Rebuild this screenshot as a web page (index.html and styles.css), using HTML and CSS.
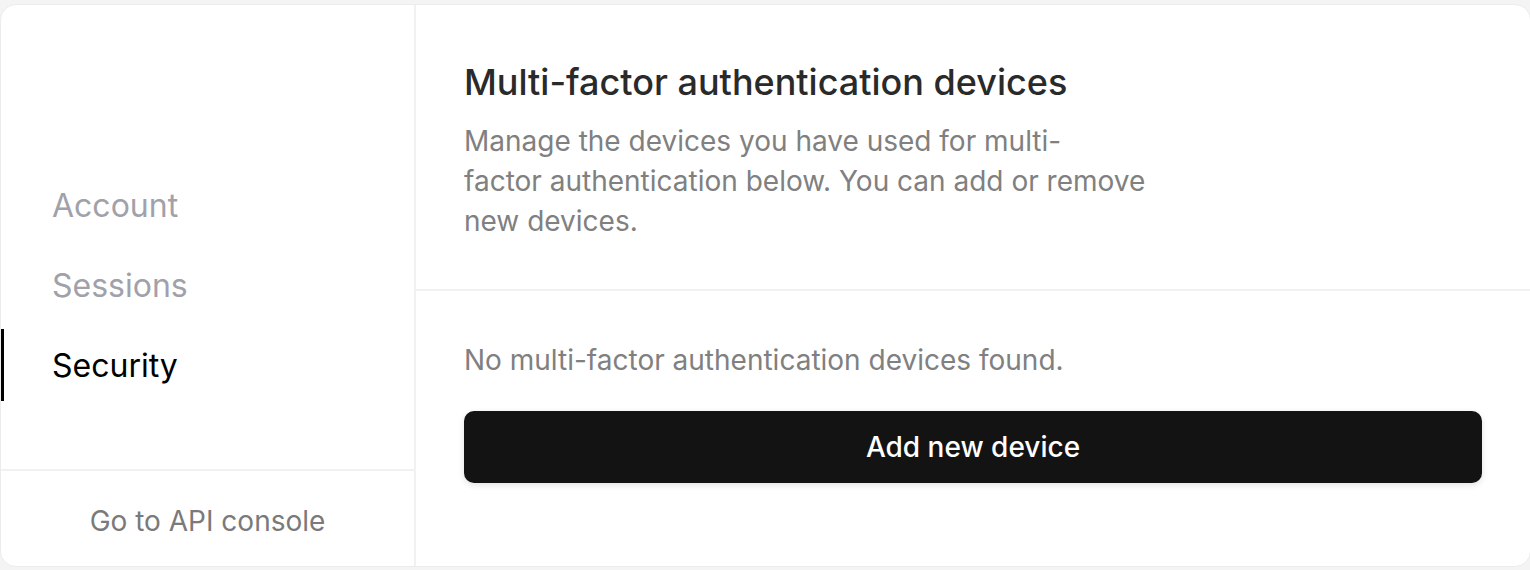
FILE: index.html
```html
<!DOCTYPE html>
<html>
<head>
<meta charset="utf-8">
<link rel="stylesheet" href="styles.css">
</head>
<body>
<div class="card">
  <aside class="sidebar">
    <nav class="nav">
      <a class="nav-item">Account</a>
      <a class="nav-item">Sessions</a>
      <a class="nav-item active">Security</a>
    </nav>
    <div class="sidebar-footer">
      <a class="console-link">Go to API console</a>
    </div>
  </aside>
  <main class="content">
    <section class="intro">
      <h1 class="title">Multi-factor authentication devices</h1>
      <p class="desc">Manage the devices you have used for multi-<br>factor authentication below. You can add or remove new devices.</p>
    </section>
    <section class="devices">
      <p class="empty">No multi-factor authentication devices found.</p>
      <button class="add-btn">Add new device</button>
    </section>
  </main>
</div>
</body>
</html>
```

FILE: styles.css
```css
* { box-sizing: border-box; }
html, body {
  margin: 0;
  padding: 0;
  background: #f4f4f4;
  overflow: hidden;
  font-family: Inter, "Noto Sans", sans-serif;
}
.card {
  margin-top: 4px;
  width: 1531px;
  height: 563px;
  background: #fff;
  border: 1px solid #ececec;
  border-radius: 16px;
  display: flex;
  overflow: hidden;
}
.sidebar {
  width: 415px;
  flex: none;
  border-right: 2px solid #f1f1f1;
  display: flex;
  flex-direction: column;
}
.nav {
  flex: 1;
  display: flex;
  flex-direction: column;
  gap: 8px;
  padding-top: 164px;
}
.nav-item {
  height: 72px;
  display: flex;
  align-items: center;
  padding-left: 48px;
  font-size: 32px;
  color: #a1a1aa;
  border-left: 4px solid transparent;
  margin-left: -1px;
}
.nav-item.active {
  color: #000;
  border-left-color: #000;
}
.sidebar-footer {
  height: 97px;
  border-top: 2px solid #f1f1f1;
  display: flex;
  align-items: center;
  justify-content: center;
  padding-top: 4px;
}
.console-link {
  font-size: 28px;
  color: #7a7a7a;
}
.content {
  flex: 1;
  display: flex;
  flex-direction: column;
}
.intro {
  height: 286px;
  border-bottom: 2px solid #f1f1f1;
  padding: 57px 48px 0 48px;
}
.title {
  margin: 0;
  font-size: 36px;
  font-weight: 500;
  color: #2a2a2a;
  line-height: 40px;
}
.desc {
  margin: 19px 0 0 0;
  max-width: 684px;
  font-size: 28px;
  line-height: 40px;
  color: #808080;
}
.devices {
  padding: 49px 48px 0 48px;
}
.empty {
  margin: 0;
  font-size: 28px;
  line-height: 40px;
  color: #808080;
}
.add-btn {
  margin-top: 31px;
  width: 100%;
  height: 72px;
  border: none;
  border-radius: 10px;
  background: #131313;
  color: #fff;
  font-family: inherit;
  font-size: 28px;
  font-weight: 500;
  box-shadow: 0 2px 6px rgba(0,0,0,0.12);
}
```
